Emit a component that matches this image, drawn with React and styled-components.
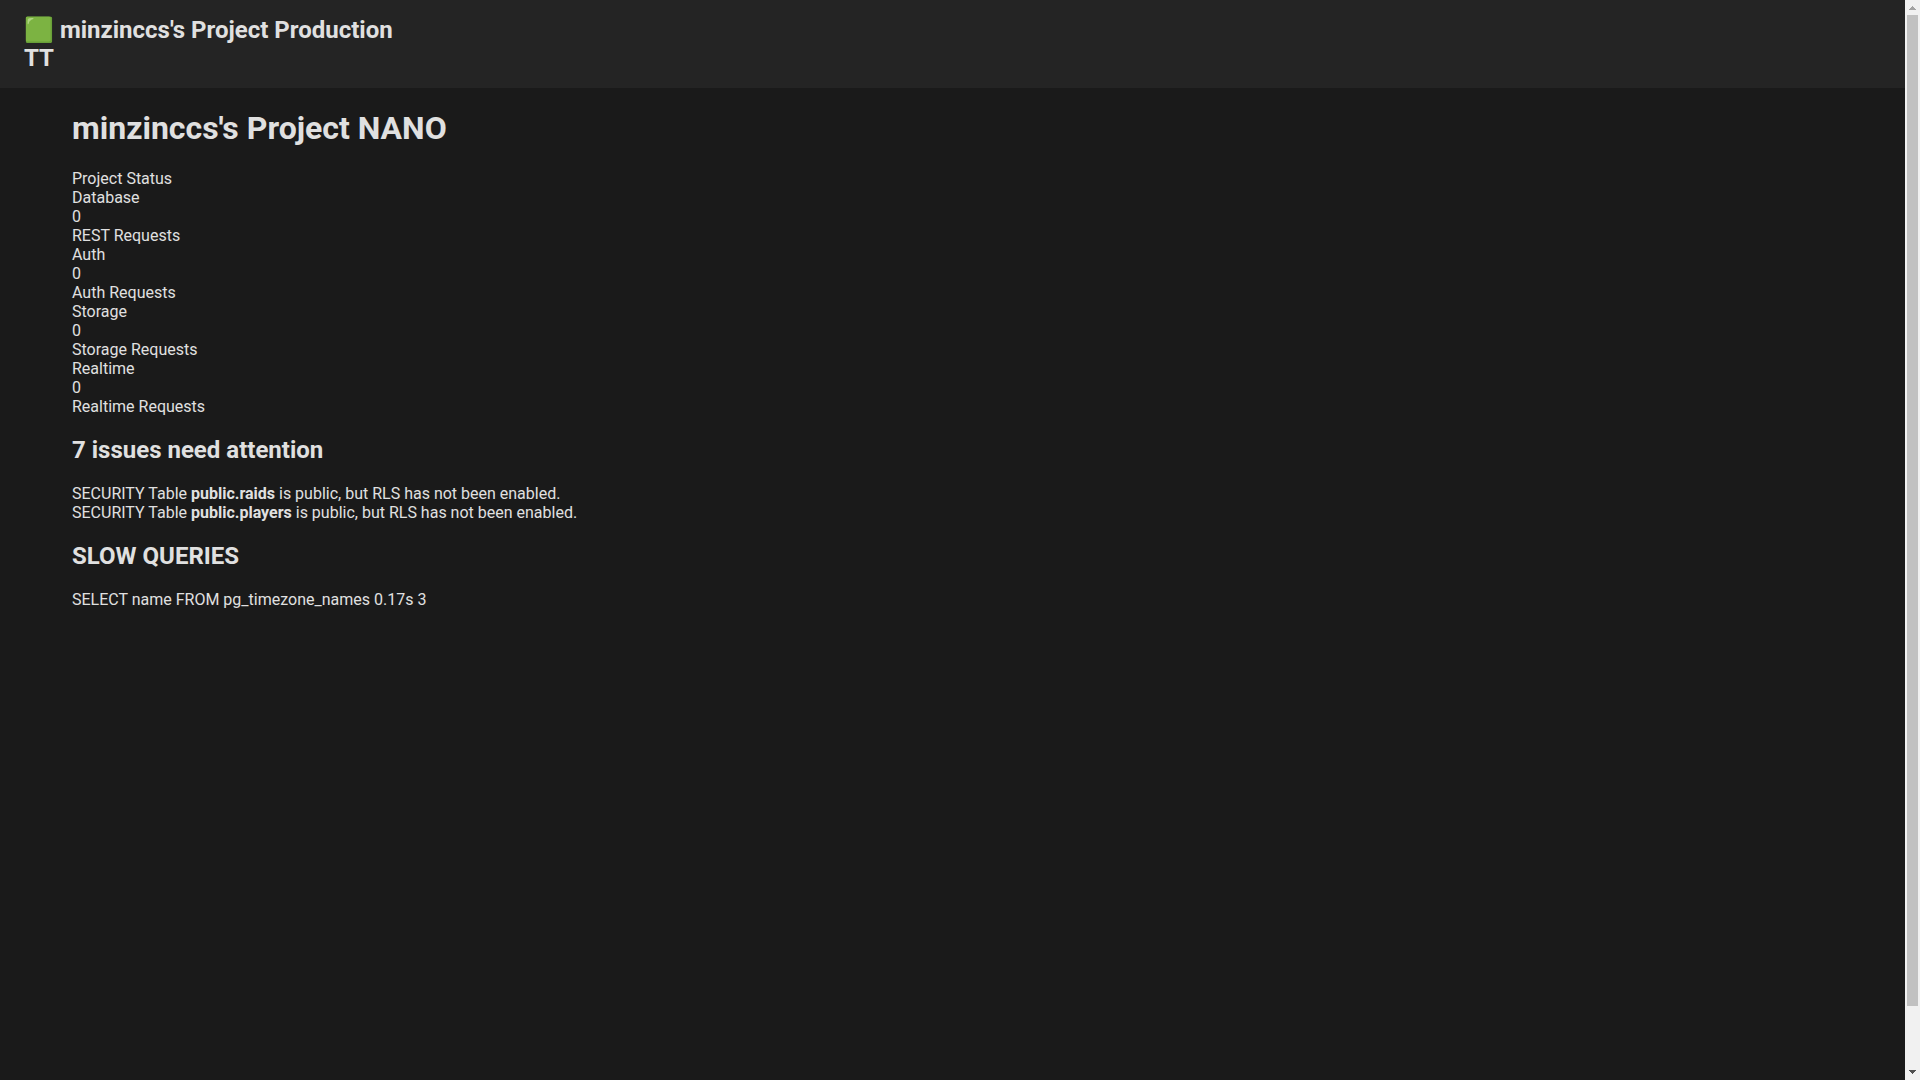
import React from "react";
import styled, { createGlobalStyle } from "styled-components";

const GlobalStyle = createGlobalStyle`
  body {
    margin: 0;
    background: #1a1a1a;
    color: #e0e0e0;
    font-family: Roboto, "Liberation Sans", sans-serif;
    font-size: 16px;
    line-height: 19px;
  }
`;

const Window = styled.div`
  display: flex;
  height: 100vh;
`;

const Page = styled.div`
  flex: 1;
  min-width: 0;
  overflow-y: auto;
  scrollbar-width: none;
`;

const Header = styled.header`
  padding: 16px 24px;
  background: #242424;
  font-size: 24px;
  font-weight: 700;
  line-height: 28px;
`;

const Main = styled.main`
  display: flow-root;
  padding: 0 72px;
`;

const Title = styled.h1`
  margin: 21px 0 22px;
  font-size: 32px;
  line-height: 38px;
`;

const Subtitle = styled.h2`
  margin: 20px 0;
  font-size: 24px;
  line-height: 28px;
`;

const ScrollColumn = styled.div`
  display: flex;
  flex-direction: column;
  width: 15px;
  background: #f1f1f1;
`;

const ScrollButton = styled.button`
  display: block;
  height: 15px;
  padding: 0;
  border: 0;
  background: transparent;
  color: ${props => (props.$dim ? "#a3a3a3" : "#505050")};
  svg {
    display: block;
  }
`;

const ScrollTrack = styled.div`
  flex: 1;
  padding: 0 2px;
`;

const ScrollThumb = styled.div`
  height: 94.4%;
  background: #c1c1c1;
`;

const stats = [
  { name: "Database", count: 0, label: "REST Requests" },
  { name: "Auth", count: 0, label: "Auth Requests" },
  { name: "Storage", count: 0, label: "Storage Requests" },
  { name: "Realtime", count: 0, label: "Realtime Requests" }
];

const tables = ["public.raids", "public.players"];

const queries = [
  { sql: "SELECT name FROM pg_timezone_names", time: "0.17s", calls: 3 }
];

const Stat = props => (
  <div>
    <div>{props.name}</div>
    <div>{props.count}</div>
    <div>{props.label}</div>
  </div>
);

const Issue = props => (
  <div>
    SECURITY Table <strong>{props.table}</strong> is public, but RLS has not
    been enabled.
  </div>
);

const Arrow = props => (
  <svg
    width="15"
    height="15"
    viewBox="0 0 15 15"
    fill="currentColor"
    shapeRendering="crispEdges"
  >
    <path d={props.d} />
  </svg>
);

const Scrollbar = () => (
  <ScrollColumn>
    <ScrollButton type="button" aria-label="Scroll up" $dim>
      <Arrow d="M7 6h1v1h1v1h1v1h1v1H4V9h1V8h1V7h1z" />
    </ScrollButton>
    <ScrollTrack>
      <ScrollThumb />
    </ScrollTrack>
    <ScrollButton type="button" aria-label="Scroll down">
      <Arrow d="M4 5h7v1h-1v1H9v1H8v1H7V8H6V7H5V6H4z" />
    </ScrollButton>
  </ScrollColumn>
);

const App = () => (
  <>
    <GlobalStyle />
    <Window>
      <Page>
        <Header>
          <div>🟩 minzinccs's Project Production</div>
          <div>TT</div>
        </Header>
        <Main>
          <Title>minzinccs's Project NANO</Title>
          <section>
            <div>Project Status</div>
            {stats.map(stat => (
              <Stat key={stat.name} {...stat} />
            ))}
          </section>
          <section>
            <Subtitle>7 issues need attention</Subtitle>
            {tables.map(table => (
              <Issue key={table} table={table} />
            ))}
          </section>
          <section>
            <Subtitle>SLOW QUERIES</Subtitle>
            {queries.map(query => (
              <div key={query.sql}>
                {query.sql} {query.time} {query.calls}
              </div>
            ))}
          </section>
        </Main>
      </Page>
      <Scrollbar />
    </Window>
  </>
);

export default App;
